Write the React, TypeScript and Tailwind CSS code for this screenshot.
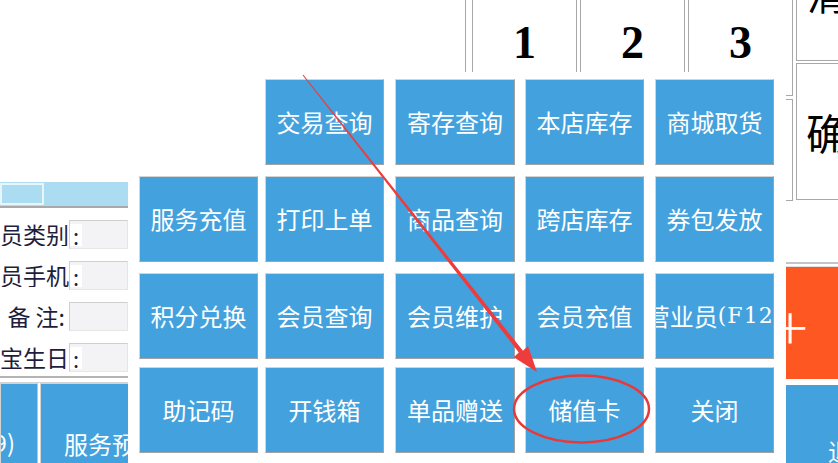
import React from "react";

const BLUE = "bg-[#43a2de]";

const ROWS: (string | null)[][] = [
  [null, "交易查询", "寄存查询", "本店库存", "商城取货"],
  ["服务充值", "打印上单", "商品查询", "跨店库存", "券包发放"],
  ["积分兑换", "会员查询", "会员维护", "会员充值", "F12"],
  ["助记码", "开钱箱", "单品赠送", "储值卡", "关闭"],
];

function MenuButton({ label, wide }: { label: string; wide?: boolean }) {
  return (
    <div
      className={`${wide ? "w-[120px]" : "w-[119px]"} h-[86px] ${BLUE} border border-t-[#d4d4d4] border-l-[#d4d4d4] border-r-[#a2a2a2] border-b-[#a2a2a2] flex items-center justify-center overflow-hidden whitespace-nowrap text-white text-[24px] leading-none`}
    >
      {label === "F12" ? (
        <>
          营业员
          <span className="font-['DejaVu_Serif',serif] text-[22px] tracking-[1px]">(F12)</span>
        </>
      ) : (
        label
      )}
    </div>
  );
}

function FieldRow({ label, colonInside = true }: { label: string; colonInside?: boolean }) {
  return (
    <div className="flex h-[29px] items-center">
      <div className="w-[69px] shrink-0 overflow-hidden whitespace-nowrap flex justify-end text-[23px] leading-none text-[#1e1e3c]">
        {label}
        {!colonInside && <span className="pr-[4px]">:</span>}
      </div>
      <div className="flex-1 min-w-0 h-full bg-[#f3f3f6] border border-t-[#cfcfcf] border-l-[#cfcfcf] border-r-[#e6e6e6] border-b-[#e6e6e6] flex items-center">
        {colonInside && (
          <span className="bg-white h-[22px] px-[3px] text-[22px] leading-[22px] text-[#1e1e3c]">:</span>
        )}
      </div>
    </div>
  );
}

export default function App() {
  return (
    <div className="relative w-[838px] h-[463px] overflow-hidden bg-white flex font-['Noto_Sans_CJK_SC',sans-serif]">
      {/* Left member panel */}
      <div className="w-[128px] shrink-0 flex flex-col">
        <div className="h-[182px]" />
        <div className="h-[24px] bg-[#abdcf1] flex items-center">
          <div className="w-[44px] h-[22px] border-2 border-[#e8f5fb]" />
        </div>
        <div className="h-[3px] border-t-2 border-[#a9a9a9]" />
        <div className="flex flex-col mt-[11px] gap-y-[12px]">
          <FieldRow label="会员类别" />
          <FieldRow label="会员手机" />
          <FieldRow label="备 注" colonInside={false} />
          <FieldRow label="宝宝生日" />
        </div>
        <div className="mt-[4px] h-[7px] border-t-2 border-b border-t-[#b4b4b4] border-b-[#d4d4d4]" />
        <div className="flex-1 flex gap-[2px]">
          <div className={`w-[38px] ${BLUE} border-l border-t border-[#d4d4d4] border-r-[#c0c0c0] border-r overflow-hidden whitespace-nowrap flex justify-end pr-[22px] pt-[46px] text-white text-[24px] leading-none`}>
            (F9)
          </div>
          <div className={`flex-1 min-w-0 ${BLUE} border-l border-t border-[#d4d4d4] overflow-hidden whitespace-nowrap pl-[23px] pt-[48px] text-white text-[24px] leading-none`}>
            服务预约
          </div>
        </div>
      </div>

      {/* Right area: numpad + side buttons */}
      <div className="flex-1 min-w-0 flex flex-col">
        <div className="h-[201px] flex">
          <div className="w-[665px] shrink-0 flex flex-col">
            <div className="h-[96px] flex justify-end">
              <div className="w-[106px] border-r border-[#a8a8a8]" />
              <div className="w-[6px]" />
              {["1", "2", "3"].map((d, i) => (
                <React.Fragment key={d}>
                  {i > 0 && <div className="w-[3px]" />}
                  <div
                    className={`w-[105px] border-l border-r border-[#a8a8a8] ${i === 2 ? "border-b" : ""} flex justify-center pt-[20px] font-['Liberation_Serif',serif] font-bold text-[46px] leading-none text-black`}
                  >
                    {d}
                  </div>
                </React.Fragment>
              ))}
            </div>
            <div className="mt-[3px] h-[102px] border-t border-r border-b border-[#a8a8a8]" />
          </div>
          <div className="ml-[3px] flex-1 min-w-0 flex flex-col">
            <div className="h-[61px] border-l border-b border-[#a8a8a8] overflow-hidden pl-[10px]">
              <div className="-mt-[27px] text-[40px] leading-none text-black whitespace-nowrap">清空</div>
            </div>
            <div className="mt-[2px] h-[137px] border-l border-t border-b border-[#a8a8a8] flex items-center pl-[9px] overflow-hidden whitespace-nowrap text-[42px] leading-none text-black">
              确认
            </div>
          </div>
        </div>
        <div className="h-[61px]" />
        <div className="flex-1 flex justify-end">
          <div className="w-[96px] shrink-0 flex flex-col">
            <div className="h-[5px] border-t-2 border-b border-t-[#c4c4c4] border-b-[#e0e0e0]" />
            <div className="h-[112px] bg-[#ff5722] flex items-center justify-center text-white text-[70px] leading-none font-['Inter',sans-serif] font-extralight">
              +
            </div>
            <div className={`mt-[6px] flex-1 ${BLUE} overflow-hidden whitespace-nowrap pl-[86px] pt-[54px] text-white text-[24px] leading-none`}>
              退货
            </div>
          </div>
        </div>
      </div>

      {/* Popup menu */}
      <div className="absolute left-[128px] top-[72px] w-[658px] h-[391px] bg-white pl-[11px] pt-[7px]">
        <div className="grid grid-cols-[126px_130px_130px_130px_119px] grid-rows-[97px_97px_94px_87px]">
          {ROWS.flat().map((label, i) =>
            label ? (
              <MenuButton key={i} label={label} wide={i % 5 === 2} />
            ) : (
              <div key={i} />
            )
          )}
        </div>
      </div>

      {/* Red annotation */}
      <svg className="absolute inset-0 pointer-events-none" width="838" height="463" viewBox="0 0 838 463">
        <polygon
          points="302.6,75.3 303.4,74.7 523,350.8 528,346 537,372 513.8,357.2 518.8,352.4"
          fill="#ee3b3b"
        />
        <ellipse cx="581.5" cy="409" rx="67.5" ry="33.5" fill="none" stroke="#e8393a" strokeWidth="2.5" />
      </svg>
    </div>
  );
}
